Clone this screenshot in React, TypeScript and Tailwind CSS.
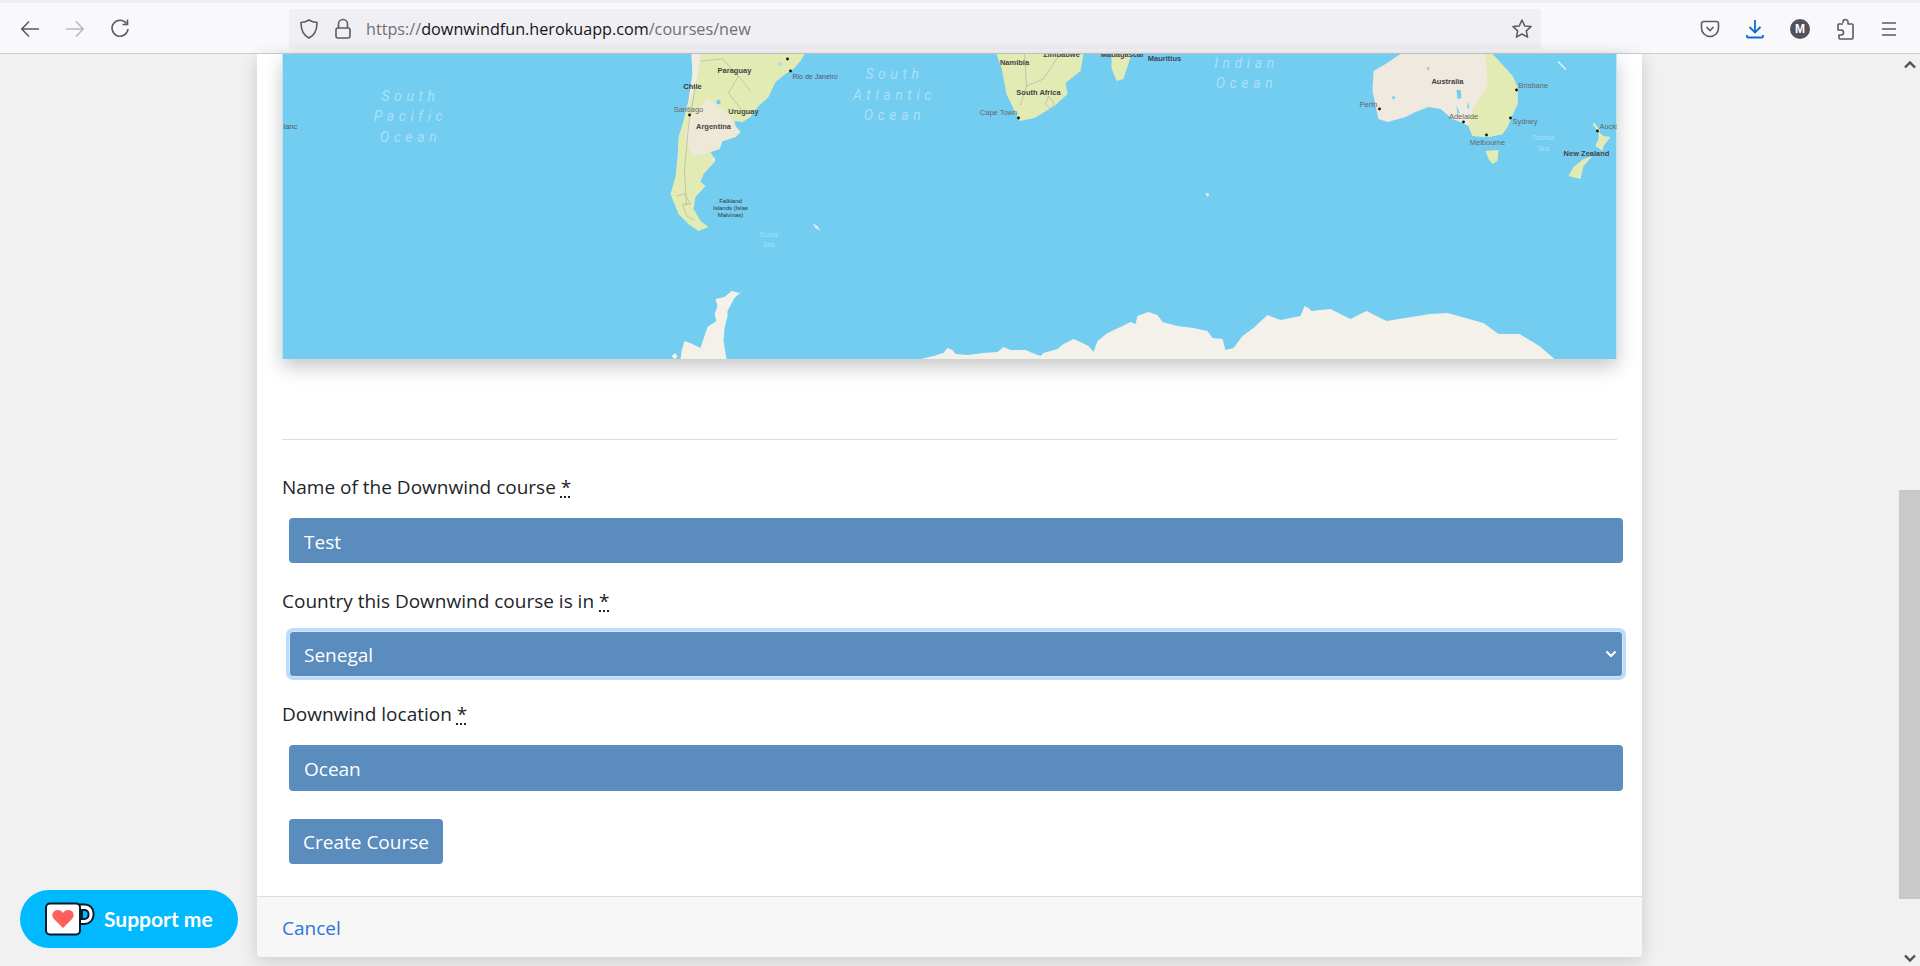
import React from 'react'

const ICON = '#5b5b66'

const MapLabel = ({ x, y, children, size = 7.5, color = '#333', anchor = 'middle', weight = 400 }: { x: number; y: number; children: string; size?: number; color?: string; anchor?: 'middle' | 'start' | 'end'; weight?: number }) => (
  <text x={x} y={y} fontSize={size} fill={color} textAnchor={anchor} fontWeight={weight} fontFamily='"Liberation Sans", sans-serif'>
    {children}
  </text>
)

const OceanLabel = ({ x, lines }: { x: number; lines: [string, number][] }) => (
  <>
    {lines.map(([t, y]) => (
      <text key={t} x={x} y={y} fontSize={14} fill="#ffffff" fillOpacity={0.42} textAnchor="middle" fontStyle="italic" letterSpacing={4.6} fontFamily='"Roboto", sans-serif'>
        {t}
      </text>
    ))}
  </>
)

const Dot = ({ x, y }: { x: number; y: number }) => <circle cx={x} cy={y} r={1.4} fill="#111" />

const WorldMap = () => (
  <svg viewBox="282 53 1334 305" className="block w-full h-full">
    <rect x="282" y="53" width="1334" height="305" fill="#72cdf1" />
    {/* south america */}
    <path d="M691 53L804 53L800 60L793 68L785 73L775 81L768 96L757 106L750 116L742 121L734 120L735 125L740 131L735 136L722 140L719 148L710 151L715 160L703 173L700 181L705 185L695 196L693 208L700 220L708 226L698 230L688 223L678 213L670 193L675 176L677 156L678 136L683 120L688 100L692 73Z" fill="#e3ebb5" />
    <path d="M691 53L700 53L697 75L692 92L686 110L683 120L688 100L692 73Z" fill="#f3ece6" />
    <path d="M692 112L708 98L722 108L732 118L735 125L740 131L735 136L722 140L719 148L710 151L692 156L684 135Z" fill="#eee9d6" />
    <path d="M700 60L722 58L738 75L750 90M738 75L728 92L742 110M695 85L688 125L684 170L686 205M676 195l8 -2l6 10l-8 0l4 12l8 4" stroke="#a7ab96" strokeWidth="0.6" fill="none" />
    <circle cx="718" cy="101" r="2.200" fill="#72cdf1" />
    <circle cx="780" cy="63" r="2" fill="#a5dde0" />
    <path d="M712 156l3 1l-1 3l-2 -1zM812 222l5 3l3 5l-5 -3z" fill="#d9eff5" />
    {/* antarctic peninsula */}
    <path d="M745 287L739 292L731 290L724 296L715 298L717 305L714 313L716 320L707 326L704 335L700 347L692 343L684 340L681 350L680 358L726 358L723 340L724 327L727 315L727 310L734 297Z" fill="#f4f1ea" />
    <path d="M671 355l4 -3l2 4l-3 2z" fill="#f4f1ea" />
    {/* africa */}
    <path d="M996 53L1083 53L1080 70L1065 82L1067 93L1054 105L1034 117L1019 120L1006 93L1001 67Z" fill="#e3ebb5" />
    <path d="M1024 53L1026 85L1020 104M1026 85L1043 78L1058 55M1048 95l6 8l-4 5l-5 -5z" stroke="#a9a99a" strokeWidth="0.6" fill="none" />
    <path d="M1111 53L1131 53L1123 78L1116 80L1111 67Z" fill="#e3ebb5" />
    {/* australia */}
    <path d="M1400 53L1492 53L1503 65L1512 75L1517 86L1517 103L1510 118L1507 126L1502 133L1488 136L1472 135L1468 125L1460 121L1452 118L1440 108L1428 106L1415 111L1405 116L1387 121L1378 118L1372 90L1373 70L1385 63Z" fill="#efe9df" />
    <path d="M1485 53L1492 53L1503 65L1512 75L1517 86L1517 103L1510 118L1507 126L1502 133L1488 136L1472 135L1468 125L1472 108L1487 85Z" fill="#e3ebb5" />
    <path d="M1456 89l4 0l1 8l-4 1zM1456 104l3 8l-2 1zM1467 100l2 7l-2 1zM1426 67l3 -1l-1 4zM1391 95l4 1l-2 3z" fill="#72cdf1" />
    <path d="M1485 150L1498 149L1497 160L1492 163L1488 158Z" fill="#e3ebb5" />
    <path d="M1598 131L1603 135L1610 136L1603 145L1602 150L1595 145L1598 138Z" fill="#e3ebb5" />
    <path d="M1592 123l2 -1l6 8l-2 1z" fill="#e3ebb5" />
    <path d="M1592 155L1583 165L1580 178L1568 175L1573 166L1583 158Z" fill="#e3ebb5" />
    <path d="M1205 192l4 1l-2 3z" fill="#f4f1ea" />
    <path d="M1558 60l8 8l-1 1l-8 -8z" fill="#e6f3f7" />
    {/* antarctica */}
    <path d="M920 358L933 355L943 352L947 347L952 349L955 353L967 354L983 352L997 351L1003 346L1010 349L1025 349L1032 352L1040 355L1043 352L1057 348L1063 343L1073 338L1082 342L1088 345L1093 351L1097 340L1107 332L1122 325L1130 321L1135 323L1137 315L1148 311L1157 314L1162 321L1177 325L1193 327L1207 330L1212 337L1222 338L1225 349L1233 347L1242 335L1253 327L1267 314L1280 319L1300 315L1304 305L1308 307L1311 310L1320 309L1330 308L1350 318L1366 310L1386 320L1417 315L1430 313L1447 312L1483 322L1498 333L1519 333L1539 345L1554 358Z" fill="#f4f1ea" />
    <OceanLabel x={410} lines={[['South', 100], ['Pacific', 120], ['Ocean', 141]]} />
    <OceanLabel x={894} lines={[['South', 78], ['Atlantic', 99], ['Ocean', 119]]} />
    <OceanLabel x={1246} lines={[['Indian', 67], ['Ocean', 87]]} />
    <MapLabel x={283} y={128} anchor="start" color="#555">lanc</MapLabel>
    <MapLabel x={734} y={72} weight={700} color="#444">Paraguay</MapLabel>
    <MapLabel x={692} y={88} weight={700} color="#333">Chile</MapLabel>
    <MapLabel x={688} y={111} color="#666">Santiago</MapLabel>
    <MapLabel x={743} y={113} weight={700} color="#444">Uruguay</MapLabel>
    <MapLabel x={713} y={128} weight={700} color="#444">Argentina</MapLabel>
    <MapLabel x={792} y={78} anchor="start" color="#557" size={7}>Rio de Janeiro</MapLabel>
    <Dot x={790} y={70} /><Dot x={787} y={58} /><Dot x={689} y={114} />
    <MapLabel x={730} y={202} size={6} color="#333">Falkland</MapLabel>
    <MapLabel x={730} y={209} size={6} color="#333">Islands (Islas</MapLabel>
    <MapLabel x={730} y={216} size={6} color="#333">Malvinas)</MapLabel>
    <MapLabel x={768} y={236} size={6.5} color="#a8e0f5">Scotia</MapLabel>
    <MapLabel x={768} y={246} size={6.5} color="#a8e0f5">Sea</MapLabel>
    <MapLabel x={1014} y={64} weight={700} color="#444">Namibia</MapLabel>
    <MapLabel x={1038} y={94} weight={700} color="#444">South Africa</MapLabel>
    <MapLabel x={998} y={114} color="#666">Cape Town</MapLabel>
    <MapLabel x={1061} y={56} weight={700} color="#444">Zimbabwe</MapLabel>
    <MapLabel x={1122} y={56} weight={700} color="#444">Madagascar</MapLabel>
    <MapLabel x={1164} y={60} weight={700} color="#445">Mauritius</MapLabel>
    <Dot x={1018} y={117} />
    <MapLabel x={1447} y={83} weight={700} color="#444">Australia</MapLabel>
    <MapLabel x={1518} y={87} anchor="start" color="#666">Brisbane</MapLabel>
    <MapLabel x={1377} y={106} anchor="end" color="#666">Perth</MapLabel>
    <MapLabel x={1463} y={118} color="#666">Adelaide</MapLabel>
    <MapLabel x={1512} y={123} anchor="start" color="#666">Sydney</MapLabel>
    <MapLabel x={1487} y={144} color="#666">Melbourne</MapLabel>
    <MapLabel x={1586} y={155} weight={700} color="#444">New Zealand</MapLabel>
    <MapLabel x={1599} y={128} anchor="start" color="#666">Auckl</MapLabel>
    <MapLabel x={1543} y={139} size={6.5} color="#a8e0f5">Tasman</MapLabel>
    <MapLabel x={1543} y={150} size={6.5} color="#a8e0f5">Sea</MapLabel>
    <Dot x={1516} y={89} /><Dot x={1379} y={108} /><Dot x={1463} y={121} /><Dot x={1510} y={117} /><Dot x={1486} y={134} /><Dot x={1597} y={130} />
  </svg>
)

const Toolbar = () => (
  <div className="shrink-0 bg-[#f9f9fb] border-b border-[#cfcfd8] h-[54px] border-t-[3px] border-t-[#f0f0f4] pt-[1px] flex items-center">
    <div className="w-[289px] flex items-center pl-[19px] gap-[23px] shrink-0">
      <svg width="22" height="22" viewBox="0 0 22 22" fill="none" stroke={ICON} strokeWidth="1.6"><path d="M20 11H3M10 3.500 2.800 11l7.200 7.500" /></svg>
      <svg width="22" height="22" viewBox="0 0 22 22" fill="none" stroke="#b9b9c0" strokeWidth="1.6"><path d="M2 11h17M12 3.500l7.200 7.500-7.200 7.500" /></svg>
      <svg width="22" height="22" viewBox="0 0 22 22" fill="none" stroke={ICON} strokeWidth="1.6"><path d="M17.500 5.500A8 8 0 1 0 19 11" /><path d="M18.500 1.500v5h-5" /></svg>
    </div>
    <div className="w-[1252px] h-10 bg-[#f0f0f4] rounded flex items-center shrink-0">
      <svg className="ml-[10px]" width="20" height="22" viewBox="0 0 20 22" fill="none" stroke={ICON} strokeWidth="1.6"><path d="M10 2c2.500 1.600 5 2.300 8 2.500 0 7-1.500 12.500-8 15.500C3.500 17 2 11.500 2 4.500 5 4.300 7.500 3.600 10 2Z" /></svg>
      <svg className="ml-[15px]" width="18" height="22" viewBox="0 0 18 22" fill="none" stroke={ICON} strokeWidth="1.6"><rect x="2" y="10" width="14" height="10" rx="2" /><path d="M4.500 10V6a4.500 4.500 0 0 1 9 0v4" /></svg>
      <span className="ml-[14px] mt-[1px] text-[16.200px] text-[#6f6f78] font-['Open_Sans',sans-serif]">
        https://<span className="text-[#15141a]">downwindfun.herokuapp.com</span>/courses/new
      </span>
      <svg className="ml-auto mr-[8px]" width="22" height="22" viewBox="0 0 22 22" fill="none" stroke={ICON} strokeWidth="1.5"><path d="m11 2 2.700 5.900 6.300.7-4.700 4.300 1.300 6.300L11 16l-5.600 3.200 1.300-6.300L2 8.600l6.300-.7L11 2Z" strokeLinejoin="round" /></svg>
    </div>
    <div className="flex-1 flex items-center pl-[159px] gap-[25px]">
      <svg width="20" height="20" viewBox="0 0 20 20" fill="none" stroke={ICON} strokeWidth="1.6"><path d="M3.500 2.500h13A2 2 0 0 1 18.500 4.500V9a8.500 8.500 0 0 1-17 0V4.500a2 2 0 0 1 2-2Z" /><path d="m6.500 8 3.500 3.500L13.500 8" /></svg>
      <svg width="20" height="20" viewBox="0 0 20 20" fill="none" stroke="#0f6cce" strokeWidth="1.8"><path d="M10 1v12M4.500 8 10 13.500 15.500 8M2 16v1.500a1 1 0 0 0 1 1h14a1 1 0 0 0 1-1V16" /></svg>
      <span className="w-5 h-5 rounded-full bg-[#52525e] text-white text-[12px] font-bold flex items-center justify-center font-['Liberation_Sans',sans-serif]">M</span>
      <svg width="20" height="22" viewBox="0 0 20 22" fill="none" stroke={ICON} strokeWidth="1.6" strokeLinejoin="round"><path d="M8 5V4a2.500 2.500 0 0 1 5 0v2h4a1 1 0 0 1 1 1v13a1 1 0 0 1-1 1H5a1 1 0 0 1-1-1v-3h2a2.500 2.500 0 0 0 0-5H3V7" /><path d="M3 7a1 1 0 0 1 1-1h4" /></svg>
      <svg width="18" height="16" viewBox="0 0 18 16" fill="none" stroke={ICON} strokeWidth="1.6"><path d="M2 2h14M2 8h14M2 14h14" /></svg>
    </div>
  </div>
)

const Req = () => (
  <abbr title="required" className="underline decoration-dotted underline-offset-[3px]">*</abbr>
)

const fieldClass = "block w-[1334px] ml-[7px] bg-[#5a8cbe] text-white text-[19px] rounded px-[15px] pt-[2px] outline-none"

const App = () => {
  return (
    <div className="relative h-[966px] flex flex-col overflow-hidden bg-[#f1f1f1] text-[#212529] font-['Open_Sans',sans-serif]">
      <Toolbar />
      <div className="flex-1 flex min-h-0">
        <div className="ml-[257px] w-[1385px] h-[903px] bg-white rounded-b shadow-[0_4px_18px_rgba(0,0,0,0.16)] flex flex-col">
          <div className="px-[25px] shrink-0">
            <div className="h-[305px] shadow-[0_8px_18px_rgba(0,0,0,0.22)]">
              <WorldMap />
            </div>
            <hr className="mt-[80px] border-[#dcdcdc]" />
          </div>
          <form className="flex-1 flex flex-col pl-[25px] pr-[18px] pt-[32px]">
            <label className="h-[30px] leading-[30px] text-[19px]">Name of the Downwind course <Req /></label>
            <input readOnly value="Test" className={`${fieldClass} mt-4 h-[45px]`} />
            <label className="h-[30px] mt-[23px] leading-[30px] text-[19px]">Country this Downwind course is in <Req /></label>
            <div className="relative mt-[15px] ml-[7px] w-[1334px] h-[46px]">
              <select defaultValue="Senegal" className="block appearance-none w-full h-full bg-[#5a8cbe] text-white text-[19px] rounded px-[14px] pt-[2px] border border-[#d4e8fd] ring-[3px] ring-[#bcdcfb] outline-none">
                <option>Senegal</option>
              </select>
              <svg className="absolute right-[6px] top-[17px]" width="12" height="12" viewBox="0 0 12 12" fill="none" stroke="#ffffff" strokeWidth="2"><path d="m1.500 3.500 4.500 4.500 4.500-4.500" /></svg>
            </div>
            <label className="h-[30px] mt-[22px] leading-[30px] text-[19px]">Downwind location <Req /></label>
            <input readOnly value="Ocean" className={`${fieldClass} mt-4 h-[46px]`} />
            <button type="button" className="mt-7 ml-[7px] w-[154px] h-[45px] pt-[2px] bg-[#5a8cbe] text-white text-[19px] rounded">Create Course</button>
          </form>
          <div className="shrink-0 h-[61px] bg-[#f7f7f7] border-t border-[#dcdcdc] rounded-b flex items-center px-[25px] pt-[2px]">
            <a className="text-[19px] text-[#2a76d6]">Cancel</a>
          </div>
        </div>
        <div className="ml-auto w-[21px] flex flex-col items-center bg-[#f1f1f1]">
          <svg className="mt-[6px] shrink-0" width="12" height="10" viewBox="0 0 12 10" fill="none" stroke="#505050" strokeWidth="2.400"><path d="m1 7.500 5-5 5 5" /></svg>
          <div className="mt-[420px] w-full h-[409px] bg-[#c9c9c9] shrink-0" />
          <svg className="mt-[54px] shrink-0" width="12" height="10" viewBox="0 0 12 10" fill="none" stroke="#505050" strokeWidth="2.400"><path d="m1 2.500 5 5 5-5" /></svg>
        </div>
      </div>
      {/* ko-fi floating button */}
      <div className="absolute left-5 top-[890px] w-[218px] h-[58px] rounded-full bg-[#00b9fe] flex items-center pl-[25px] text-white">
        <svg width="50" height="34" viewBox="0 0 50 34">
          <path d="M34 2.500h6a8.500 8.500 0 0 1 8.500 8.500v2a9 9 0 0 1-9 9H34" fill="#fff" stroke="#0b1b2b" strokeWidth="2" />
          <path d="M37 8h2.500a4 4 0 0 1 4 4v1a4 4 0 0 1-4 4H37Z" fill="#00b9fe" stroke="#0b1b2b" strokeWidth="2" />
          <rect x="1" y="1.500" width="34" height="31" rx="4" fill="#fff" stroke="#0b1b2b" strokeWidth="2" />
          <path d="M18 26 9 17c-3.500-3.500-1-9 3.500-9 2.500 0 4.500 1.300 5.500 3 1-1.700 3-3 5.500-3 4.500 0 7 5.500 3.500 9Z" fill="#ff5e5b" />
        </svg>
        <span className="ml-[9px] text-[21px] font-bold font-['Lato',sans-serif]">Support me</span>
      </div>
    </div>
  )
}

export default App
